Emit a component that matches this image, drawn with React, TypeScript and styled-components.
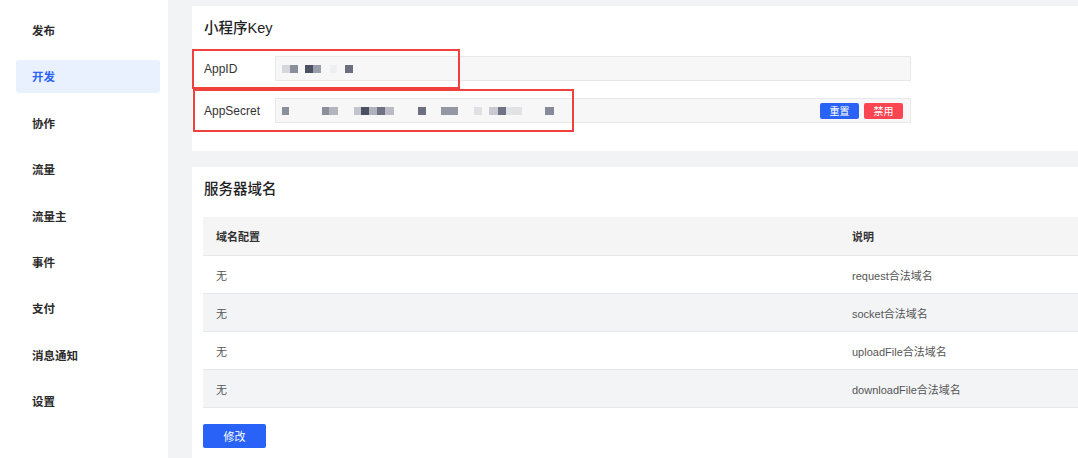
import React from "react";
import styled, { createGlobalStyle } from "styled-components";

const GlobalStyle = createGlobalStyle`
  html, body {
    margin: 0;
    padding: 0;
    background: #f2f3f5;
    font-family: "Liberation Sans", "Noto Sans CJK SC", sans-serif;
    color: #333;
  }
`;

const Page = styled.div`
  display: flex;
  width: 1078px;
  height: 458px;
  overflow: hidden;
`;

const Sidebar = styled.nav`
  width: 168px;
  flex-shrink: 0;
  background: #fff;
  padding-top: 13.5px;
  box-sizing: border-box;
  display: flex;
  flex-direction: column;
  gap: 13.4px;
`;

const NavItem = styled.div<{ $active?: boolean }>`
  margin: 0 8px 0 16px;
  height: 33px;
  border-radius: 3px;
  padding-left: 16px;
  display: flex;
  align-items: center;
  font-size: 11.5px;
  font-weight: 600;
  color: ${(p) => (p.$active ? "#2b63f6" : "#2b2b2b")};
  background: ${(p) => (p.$active ? "#e9f0fe" : "transparent")};
`;

const Main = styled.main`
  flex: 1;
  padding: 6px 0 0 24px;
  display: flex;
  flex-direction: column;
  gap: 16px;
`;

const Card = styled.section<{ $grow?: boolean }>`
  position: relative;
  background: #fff;
  padding: 11px 0 0 12px;
  box-sizing: border-box;
  ${(p) => (p.$grow ? "flex: 1;" : "height: 145px;")}
`;

const Title = styled.h2`
  margin: 0;
  font-size: 14.5px;
  line-height: 23px;
  font-weight: 500;
  color: #222;
`;

const KeyRows = styled.div`
  margin-top: 16px;
  display: flex;
  flex-direction: column;
  gap: 17px;
`;

const KeyRow = styled.div`
  display: flex;
  align-items: center;
`;

const Label = styled.span`
  width: 71px;
  font-size: 12px;
  color: #333;
`;

const Field = styled.div`
  width: 636px;
  height: 25px;
  box-sizing: border-box;
  background: #f7f7f8;
  border: 1px solid #e8e8ea;
  display: flex;
  align-items: center;
  padding: 0 7px 0 4px;
`;

const Pixels = styled.div`
  display: flex;
  flex: 1;
  height: 8px;
`;

const Pixel = styled.span<{ $w: number; $gap: number; $c: string }>`
  width: ${(p) => p.$w}px;
  margin-left: ${(p) => p.$gap}px;
  height: 8px;
  background: ${(p) => p.$c};
`;

const SmallButton = styled.button<{ $danger?: boolean }>`
  width: 39px;
  height: 16px;
  margin-left: 5px;
  padding: 0;
  border: none;
  border-radius: 2px;
  font-family: inherit;
  font-size: 10px;
  color: #fff;
  background: ${(p) => (p.$danger ? "#fb4551" : "#2a62f6")};
`;

const Highlight = styled.div<{ $x: number; $y: number; $w: number; $h: number }>`
  position: absolute;
  left: ${(p) => p.$x}px;
  top: ${(p) => p.$y}px;
  width: ${(p) => p.$w}px;
  height: ${(p) => p.$h}px;
  box-sizing: border-box;
  border: 2px solid #f1413e;
  pointer-events: none;
`;

const Table = styled.div`
  margin-top: 16px;
  margin-left: -1px;
  font-size: 11px;
`;

const Row = styled.div<{ $head?: boolean; $alt?: boolean }>`
  display: flex;
  align-items: center;
  height: ${(p) => (p.$head ? 39 : 38)}px;
  box-sizing: border-box;
  border-bottom: 1px solid #e7e8ea;
  background: ${(p) => (p.$head ? "#f5f5f6" : p.$alt ? "#f3f4f6" : "#fff")};
  color: ${(p) => (p.$head ? "#333" : "#555")};
  font-weight: ${(p) => (p.$head ? 600 : 400)};
`;

const Cell = styled.div<{ $w?: number }>`
  padding-left: 13px;
  ${(p) => (p.$w ? `width: ${p.$w}px; flex-shrink: 0;` : "flex: 1;")}
`;

const PrimaryButton = styled.button`
  margin-top: 16px;
  margin-left: -1px;
  width: 63px;
  height: 24px;
  border: none;
  border-radius: 2px;
  background: #2962f6;
  color: #fff;
  font-family: inherit;
  font-size: 11px;
`;

const navItems = ["发布", "开发", "协作", "流量", "流量主", "事件", "支付", "消息通知", "设置"];

type Px = [number, number, string];

const appIdPixels: Px[] = [
  [2, 8, "#d6d7dc"],
  [0, 8, "#8b8f9c"],
  [7, 8, "#4b5063"],
  [0, 8, "#9a9eaa"],
  [9, 7, "#eeeff1"],
  [8, 8, "#6b6f80"],
];

const secretPixels: Px[] = [
  [2, 7, "#8b8f9c"],
  [33, 7, "#8b8f9c"],
  [0, 9, "#b3b6bf"],
  [16, 7, "#c3c5cc"],
  [0, 8, "#4b5063"],
  [0, 8, "#b0b3bc"],
  [0, 8, "#6f7384"],
  [0, 9, "#b9bcc4"],
  [24, 8, "#6b6f80"],
  [15, 17, "#9498a5"],
  [16, 8, "#dfe0e4"],
  [7, 9, "#c9cbd1"],
  [0, 8, "#6f7384"],
  [0, 16, "#e2e3e7"],
  [23, 9, "#878b99"],
];

const domains = [
  "request合法域名",
  "socket合法域名",
  "uploadFile合法域名",
  "downloadFile合法域名",
];

const PixelRow = ({ data }: { data: Px[] }) => (
  <Pixels>
    {data.map(([gap, w, c], i) => (
      <Pixel key={i} $gap={gap} $w={w} $c={c} />
    ))}
  </Pixels>
);

export default function App() {
  return (
    <Page>
      <GlobalStyle />
      <Sidebar>
        {navItems.map((item) => (
          <NavItem key={item} $active={item === "开发"}>
            {item}
          </NavItem>
        ))}
      </Sidebar>
      <Main>
        <Card>
          <Title>小程序Key</Title>
          <KeyRows>
            <KeyRow>
              <Label>AppID</Label>
              <Field>
                <PixelRow data={appIdPixels} />
              </Field>
            </KeyRow>
            <KeyRow>
              <Label>AppSecret</Label>
              <Field>
                <PixelRow data={secretPixels} />
                <SmallButton>重置</SmallButton>
                <SmallButton $danger>禁用</SmallButton>
              </Field>
            </KeyRow>
          </KeyRows>
          <Highlight $x={0} $y={43} $w={268} $h={40} />
          <Highlight $x={1} $y={83} $w={381} $h={43} />
        </Card>
        <Card $grow>
          <Title>服务器域名</Title>
          <Table>
            <Row $head>
              <Cell $w={623}>域名配置</Cell>
              <Cell>说明</Cell>
            </Row>
            {domains.map((d, i) => (
              <Row key={d} $alt={i % 2 === 1}>
                <Cell $w={623}>无</Cell>
                <Cell>{d}</Cell>
              </Row>
            ))}
          </Table>
          <PrimaryButton>修改</PrimaryButton>
        </Card>
      </Main>
    </Page>
  );
}
